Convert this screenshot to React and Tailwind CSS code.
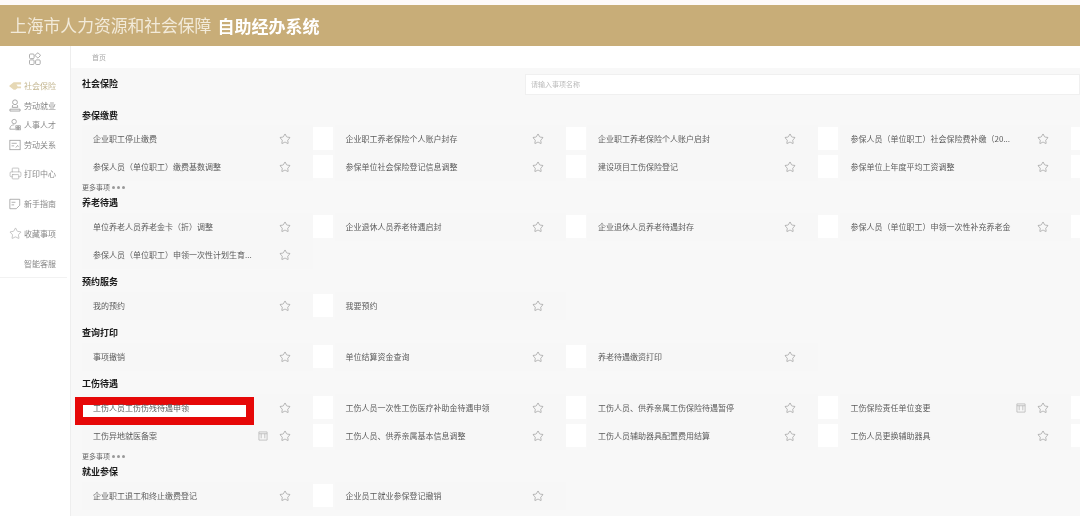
import React from 'react';
import { Star, Printer } from 'lucide-react';

const font = { fontFamily: '"Noto Sans CJK SC", sans-serif' };

const GridIcon = () => (
  <svg width="13" height="13" viewBox="0 0 13 13" fill="none" stroke="#9a9a9a" strokeWidth="0.8">
    <rect x="0.5" y="2" width="4.6" height="4.6" rx="1" />
    <rect x="0.5" y="7.9" width="4.6" height="4.6" rx="1" />
    <rect x="6.6" y="7.9" width="4.6" height="4.6" rx="1" />
    <rect x="6.8" y="1.4" width="4" height="4" rx="0.8" transform="rotate(45 8.8 3.4)" />
  </svg>
);

const HandIcon = () => (
  <svg width="13" height="10" viewBox="0 0 14 10" fill="#e6d8b5">
    <path d="M0 5 L5 1 H13 V3.5 H8 L9.5 5.5 H13 V7.5 H9 L7 9 H5 Z" />
  </svg>
);

const WorkIcon = () => (
  <svg width="12" height="13" viewBox="0 0 13 14" fill="none" stroke="#999" strokeWidth="0.9">
    <circle cx="6.5" cy="3.5" r="2.6" />
    <path d="M4 6.5 L3.5 9 H9.5 L9 6.5" />
    <path d="M1 11 H12 V13 H1 Z" />
  </svg>
);

const PeopleIcon = () => (
  <svg width="12" height="13" viewBox="0 0 14 14" fill="none" stroke="#999" strokeWidth="0.9">
    <circle cx="6" cy="3.6" r="2.6" />
    <path d="M1 12.5 C1 8.5 3.5 7.5 6 7.5" />
    <path d="M1 12.5 H7" />
    <rect x="8" y="8.5" width="2.2" height="2" />
    <rect x="11" y="8.5" width="2.2" height="2" />
    <rect x="8" y="11.2" width="2.2" height="2" />
    <rect x="11" y="11.2" width="2.2" height="2" />
  </svg>
);

const RelationIcon = () => (
  <svg width="12" height="12" viewBox="0 0 14 14" fill="none" stroke="#999" strokeWidth="0.9">
    <rect x="1" y="1.5" width="12" height="11" />
    <path d="M3 5 H9 M3 8 H6 M8 10 L10 7.5 L11 9" />
  </svg>
);

const GuideIcon = () => (
  <svg width="12" height="12" viewBox="0 0 14 14" fill="none" stroke="#999" strokeWidth="0.9">
    <path d="M1 1.5 H12.5 V6 M1 1.5 V12.5 H8.5 L12.5 8.5 V6" />
    <path d="M3 5 H7.5 M3 8 H6" />
  </svg>
);

const DocIcon = () => (
  <svg width="10" height="10" viewBox="0 0 11 11" fill="none" stroke="#b8b8b8" strokeWidth="0.9" className="mr-[11px] shrink-0">
    <path d="M1 1 H10 V10 H1 Z" />
    <path d="M1 3 H10 M3.5 3 V8 M7.5 3 V8" />
  </svg>
);

const navItems = [
  { label: '社会保险', active: true, icon: <HandIcon />, cls: 'mt-[6px]' },
  { label: '劳动就业', icon: <WorkIcon />, cls: 'mt-[1px]' },
  { label: '人事人才', icon: <PeopleIcon /> },
  { label: '劳动关系', icon: <RelationIcon />, cls: 'mt-[1px]' },
  { label: '打印中心', icon: <Printer size={13} strokeWidth={1} className="text-[#999]" />, cls: 'mt-[10px]' },
  { label: '新手指南', icon: <GuideIcon />, cls: 'mt-[11px]' },
  { label: '收藏事项', icon: <Star size={13} strokeWidth={1} className="text-[#999]" />, cls: 'mt-[11px]' },
  { label: '智能客服', cls: 'mt-[11px]' },
];

const sections = [
  {
    title: '参保缴费',
    titleCls: 'h-[19px]',
    more: true,
    rows: [
      ['企业职工停止缴费', '企业职工养老保险个人账户封存', '企业职工养老保险个人账户启封', '参保人员（单位职工）社会保险费补缴（20...'],
      ['参保人员（单位职工）缴费基数调整', '参保单位社会保险登记信息调整', '建设项目工伤保险登记', '参保单位上年度平均工资调整'],
    ],
  },
  {
    title: '养老待遇',
    rows: [
      ['单位养老人员养老金卡（折）调整', '企业退休人员养老待遇启封', '企业退休人员养老待遇封存', '参保人员（单位职工）申领一次性补充养老金'],
      ['参保人员（单位职工）申领一次性计划生育...'],
    ],
  },
  { title: '预约服务', rows: [['我的预约', '我要预约']] },
  { title: '查询打印', rows: [['事项撤销', '单位结算资金查询', '养老待遇缴资打印']] },
  {
    title: '工伤待遇',
    more: true,
    rows: [
      [{ text: '工伤人员工伤伤残待遇申领', mark: true }, '工伤人员一次性工伤医疗补助金待遇申领', '工伤人员、供养亲属工伤保险待遇暂停', { text: '工伤保险责任单位变更', doc: true }],
      [{ text: '工伤异地就医备案', doc: true }, '工伤人员、供养亲属基本信息调整', '工伤人员辅助器具配置费用结算', '工伤人员更换辅助器具'],
    ],
  },
  { title: '就业参保', rows: [['企业职工退工和终止缴费登记', '企业员工就业参保登记撤销']] },
];

function NavItem({ item }) {
  return (
    <div className={`flex items-center h-[19px] pl-[9px] ${item.cls || ''}`}>
      <div className="w-[15px] flex justify-start">{item.icon}</div>
      <span className={`text-[8px] ${item.active ? 'text-[#c4b792]' : 'text-[#888]'}`}>{item.label}</span>
    </div>
  );
}

function Item({ item, square }) {
  const text = typeof item === 'string' ? item : item.text;
  return (
    <div className="flex w-[252.5px] h-[28px] shrink-0">
      <div className={`relative flex items-center w-[231px] pl-[11px] pr-[22px] bg-[#f7f7f7] ${item.mark ? 'z-10' : ''}`}>
        {/* 红框标注 */}
        {item.mark && (
          <div className="absolute left-[-7px] top-[3px] w-[179px] h-[28px] border-[8px] border-[#e60808] bg-white"></div>
        )}
        <span className="relative flex-1 text-[8px] text-[#5c5c5c] whitespace-nowrap">{text}</span>
        {item.doc && <DocIcon />}
        <Star size={12} strokeWidth={1} className="text-[#777] shrink-0" />
      </div>
      {square && <div className="w-[20px] h-[23px] mt-[2px] bg-white"></div>}
    </div>
  );
}

function Section({ section }) {
  return (
    <div className={section.more ? '' : 'pb-[3px]'}>
      <div className={`${section.titleCls || 'h-[20px]'} flex items-center text-[9px] font-bold text-[#1a1a1a]`}>{section.title}</div>
      {section.rows.map((row, i) => (
        <div key={i} className="flex">
          {row.map((item, j) => (
            <Item key={j} item={item} square={j < row.length - 1 || row.length === 4} />
          ))}
        </div>
      ))}
      {section.more && (
        <div className="h-[12px] flex items-center text-[7px] text-[#666]">
          更多事项
          <span className="ml-[2px] flex gap-[2px]">
            <span className="w-[3px] h-[3px] rounded-full bg-[#999]"></span>
            <span className="w-[3px] h-[3px] rounded-full bg-[#999]"></span>
            <span className="w-[3px] h-[3px] rounded-full bg-[#999]"></span>
          </span>
        </div>
      )}
    </div>
  );
}

export default function App() {
  return (
    <div className="w-[1080px] h-[516px] overflow-hidden bg-white blur-[0.6px]" style={font}>
      <div className="h-[5px] bg-[#fdf9f8]"></div>
      <div className="h-[41px] flex items-center pl-[10px] bg-[#c8ad78] text-[16.8px] text-[#f2ead9]">
        上海市人力资源和社会保障
        <span className="ml-[6px] text-[17px] font-bold text-white">自助经办系统</span>
      </div>
      <div className="flex h-[470px]">
        <aside className="w-[71px] shrink-0 border-r border-[#eee] bg-white">
          <div className="h-[24px] flex items-center justify-center">
            <GridIcon />
          </div>
          {navItems.map((item) => <NavItem key={item.label} item={item} />)}
          <div className="mt-[4px] mr-[3px] border-b border-[#f2f2f2]"></div>
        </aside>
        <main className="flex-1 min-w-0 bg-[#f8f8f8]">
          <div className="h-[22px] flex items-center pl-[21px] pt-[1px] bg-white text-[7px] text-[#aaa]">首页</div>
          <div className="pl-[11px]">
            <div className="h-[38px] pb-[6px] flex items-center">
              <span className="w-[443px] text-[9px] font-bold text-[#1a1a1a]">社会保险</span>
              <div className="flex-1 h-[21px] flex items-center pl-[5px] bg-white border border-[#f0f0f0] text-[7px] text-[#bbb]">
                请输入事项名称
              </div>
            </div>
            {sections.map((section) => <Section key={section.title} section={section} />)}
          </div>
        </main>
      </div>
    </div>
  );
}
